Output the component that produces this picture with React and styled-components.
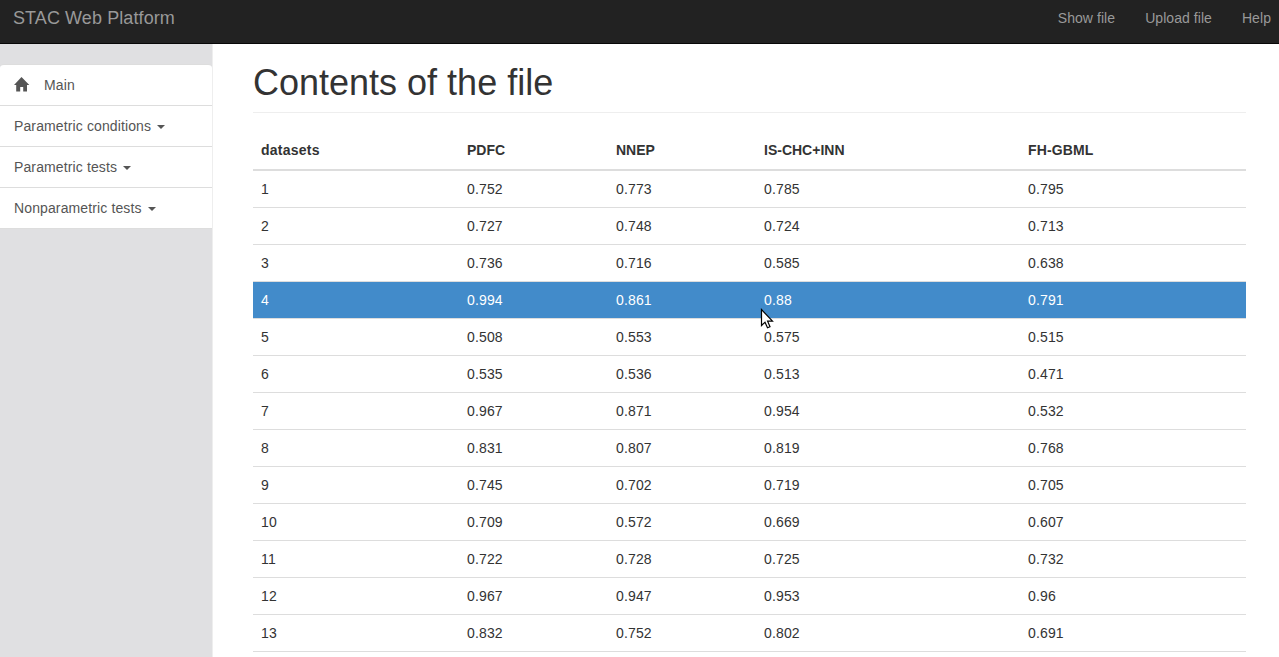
import React from "react";
import styled, { createGlobalStyle } from "styled-components";

const GlobalStyle = createGlobalStyle`
  *, *::before, *::after { box-sizing: border-box; }
  html, body { margin: 0; height: 100%; overflow: hidden; }
  body {
    font-family: "Liberation Sans", Arial, sans-serif;
    font-size: 14px;
    line-height: 20px;
    color: #333;
    background: #fff;
  }
`;

const Page = styled.div`
  display: flex;
  flex-direction: column;
  height: 100vh;
  overflow: hidden;
`;

const Navbar = styled.header`
  display: flex;
  flex: none;
  justify-content: space-between;
  height: 44px;
  padding: 8px 8px 0 13px;
  background: #222;
  border-bottom: 1px solid #080808;
`;

const Brand = styled.a`
  color: #999;
  font-size: 18px;
  letter-spacing: 0.09px;
`;

const NavLinks = styled.nav`
  display: flex;
  gap: 30px;
  letter-spacing: 0.06px;
`;

const NavLink = styled.a`
  color: #999;
  white-space: nowrap;
`;

const Body = styled.div`
  display: flex;
  flex: 1;
  min-height: 0;
`;

const Sidebar = styled.aside`
  flex: none;
  width: 213px;
  padding-top: 20px;
  background: #e0e0e2;
  border-right: 1px solid #eee;
`;

const Menu = styled.ul`
  margin: 0;
  padding: 0;
  list-style: none;
  border-top: 1px solid #ddd;
  border-radius: 4px 4px 0 0;
  overflow: hidden;
`;

const MenuItem = styled.li`
  display: flex;
  align-items: center;
  height: 41px;
  padding-left: 14px;
  color: #555;
  letter-spacing: 0.12px;
  background: #fff;
  border-bottom: 1px solid #ddd;
`;

const HomeIcon = styled.svg`
  width: 16px;
  height: 15px;
  margin-right: 14px;
  margin-top: -2px;
  fill: #555;
`;

const Caret = styled.span`
  margin: 2px 0 0 6px;
  border-top: 4px solid #555;
  border-left: 4px solid transparent;
  border-right: 4px solid transparent;
`;

const Content = styled.main`
  flex: 1;
  padding: 19px 33px 0 40px;
  overflow: hidden;
`;

const Title = styled.h1`
  margin: 0 0 20px;
  height: 50px;
  font-size: 36px;
  font-weight: 400;
  line-height: 40px;
  border-bottom: 1px solid #eee;
`;

const Table = styled.table`
  width: 993px;
  table-layout: fixed;
  border-collapse: separate;
  border-spacing: 0;
`;

const Col = styled.col`
  width: ${(p) => p.$width}px;
`;

const HeadCell = styled.th`
  padding: 7px 8px 9px;
  text-align: left;
  font-weight: 700;
  letter-spacing: ${(p) => p.$tracking}px;
  border-bottom: 2px solid #ddd;
`;

const Row = styled.tr`
  color: ${(p) => (p.$active ? "#fff" : "#333")};
  background: ${(p) => (p.$active ? "#428bca" : "transparent")};
`;

const Cell = styled.td`
  padding: 8px;
  letter-spacing: 0.15px;
  border-bottom: 1px solid #ddd;
`;

const Cursor = styled.svg`
  position: absolute;
  left: 760px;
  top: 308px;
  width: 14px;
  height: 22px;
  pointer-events: none;
`;

const columns = [
  { name: "datasets", width: 206, tracking: 0.25 },
  { name: "PDFC", width: 149, tracking: 0 },
  { name: "NNEP", width: 148, tracking: 0 },
  { name: "IS-CHC+INN", width: 264, tracking: 0 },
  { name: "FH-GBML", width: 226, tracking: 0.12 },
];

const rows = [
  ["1", "0.752", "0.773", "0.785", "0.795"],
  ["2", "0.727", "0.748", "0.724", "0.713"],
  ["3", "0.736", "0.716", "0.585", "0.638"],
  ["4", "0.994", "0.861", "0.88", "0.791"],
  ["5", "0.508", "0.553", "0.575", "0.515"],
  ["6", "0.535", "0.536", "0.513", "0.471"],
  ["7", "0.967", "0.871", "0.954", "0.532"],
  ["8", "0.831", "0.807", "0.819", "0.768"],
  ["9", "0.745", "0.702", "0.719", "0.705"],
  ["10", "0.709", "0.572", "0.669", "0.607"],
  ["11", "0.722", "0.728", "0.725", "0.732"],
  ["12", "0.967", "0.947", "0.953", "0.96"],
  ["13", "0.832", "0.752", "0.802", "0.691"],
];

const menus = ["Parametric conditions", "Parametric tests", "Nonparametric tests"];

export default function App() {
  return (
    <Page>
      <GlobalStyle />
      <Navbar>
        <Brand>STAC Web Platform</Brand>
        <NavLinks>
          <NavLink>Show file</NavLink>
          <NavLink>Upload file</NavLink>
          <NavLink>Help</NavLink>
        </NavLinks>
      </Navbar>
      <Body>
        <Sidebar>
          <Menu>
            <MenuItem>
              <HomeIcon viewBox="0 0 16 15">
                <path d="M7.5 0 L15.3 8 H13 V14.5 H9.2 V10 H6.2 V14.5 H2.2 V8 H0 Z" />
              </HomeIcon>
              Main
            </MenuItem>
            {menus.map((label) => (
              <MenuItem key={label}>
                {label}
                <Caret />
              </MenuItem>
            ))}
          </Menu>
        </Sidebar>
        <Content>
          <Title>Contents of the file</Title>
          <Table>
            <colgroup>
              {columns.map((c) => (
                <Col key={c.name} $width={c.width} />
              ))}
            </colgroup>
            <thead>
              <tr>
                {columns.map((c) => (
                  <HeadCell key={c.name} $tracking={c.tracking}>
                    {c.name}
                  </HeadCell>
                ))}
              </tr>
            </thead>
            <tbody>
              {rows.map((row) => (
                <Row key={row[0]} $active={row[0] === "4"}>
                  {row.map((value, i) => (
                    <Cell key={i}>{value}</Cell>
                  ))}
                </Row>
              ))}
            </tbody>
          </Table>
        </Content>
      </Body>
      <Cursor viewBox="0 0 14 22">
        <path
          d="M1.5 1.5 V17.5 L5 14.2 L7.5 19.8 L10 18.7 L7.6 13.2 H12.5 Z"
          fill="#fff"
          stroke="#000"
          strokeWidth="1.2"
        />
      </Cursor>
    </Page>
  );
}
